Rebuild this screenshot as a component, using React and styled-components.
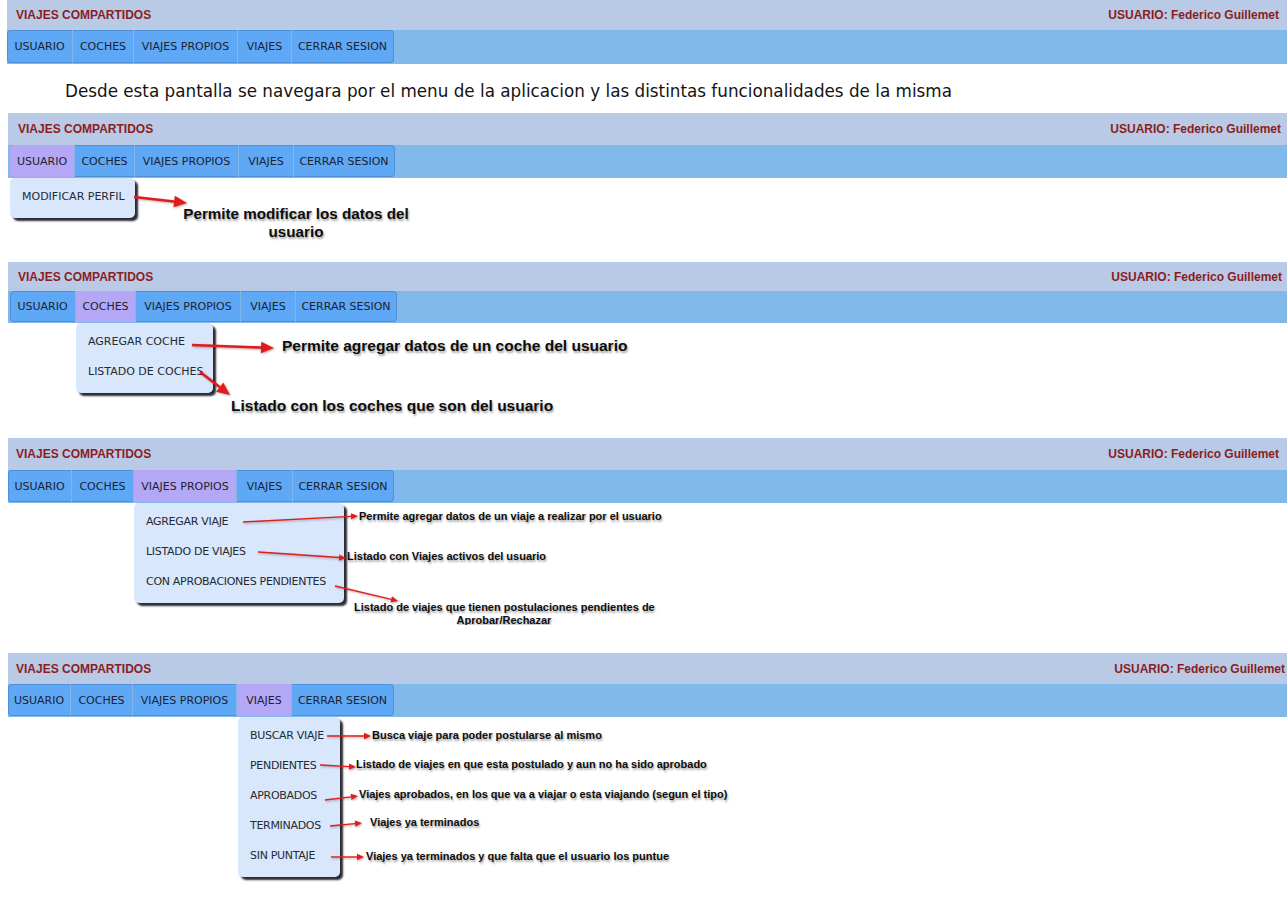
import React from 'react';
import styled, { createGlobalStyle } from 'styled-components';

const GlobalStyle = createGlobalStyle`
  html, body {
    margin: 0;
    padding: 0;
    background: #ffffff;
  }
  body {
    font-family: "DejaVu Sans", Verdana, sans-serif;
  }
`;

const MENU = ['USUARIO', 'COCHES', 'VIAJES PROPIOS', 'VIAJES', 'CERRAR SESION'];
const RED = '#e01c1c';

const Page = styled.div`
  display: flex;
  flex-direction: column;
  width: 1287px;
  height: 919px;
  overflow: hidden;
`;

const Shot = styled.section`
  position: relative;
  display: flex;
  flex-direction: column;
  margin-bottom: ${(p) => p.$gap || 0}px;
  height: ${(p) => p.$height}px;
  overflow: hidden;
  flex-shrink: 0;
`;

const Header = styled.header`
  display: flex;
  justify-content: space-between;
  align-items: center;
  height: ${(p) => p.$h}px;
  margin-left: ${(p) => p.$indent}px;
  padding: 0 ${(p) => p.$padRight}px 0 ${(p) => p.$padLeft}px;
  background: #b9cae6;
  font: bold 12px "Liberation Sans", Arial, sans-serif;
  color: #8b1d1f;
  flex-shrink: 0;
`;

const NavBar = styled.nav`
  display: flex;
  height: ${(p) => p.$h}px;
  margin-left: ${(p) => p.$indent}px;
  padding-left: ${(p) => p.$offset}px;
  background: #80b9ea;
  flex-shrink: 0;
`;

const Menu = styled.ul`
  display: flex;
  margin: 0;
  padding: 0;
  list-style: none;
  height: calc(100% - 1px);
  background: #5fa8f5;
  border-radius: 4px;
  box-shadow: inset 0 0 0 1px rgba(50, 100, 160, 0.35);
`;

const MenuItem = styled.li`
  position: relative;
  display: flex;
  align-items: center;
  justify-content: center;
  width: ${(p) => p.$w}px;
  font-size: 11px;
  color: #1c2230;
  background: ${(p) => (p.$active ? '#b4a8f6' : 'transparent')};
  border-right: 1px solid ${(p) => (p.$last ? 'transparent' : '#82b6ea')};
  border-radius: ${(p) => (p.$first ? '4px 0 0 4px' : p.$last ? '0 4px 4px 0' : '0')};
  box-sizing: border-box;
  white-space: nowrap;
`;

const Dropdown = styled.ul`
  position: absolute;
  top: calc(100% + 1px);
  left: ${(p) => p.$shift || 0}px;
  z-index: 2;
  width: ${(p) => p.$w}px;
  margin: 0;
  padding: 4px 0 6px;
  list-style: none;
  background: #d8e7fb;
  border-radius: 5px;
  box-shadow: 3px 3px 2px rgba(20, 20, 30, 0.9);
  box-sizing: border-box;
`;

const DropItem = styled.li`
  height: 30px;
  line-height: 30px;
  padding-left: 12px;
  font-size: 11px;
  letter-spacing: ${(p) => (p.$tight ? '-0.3px' : '0')};
  color: #262a33;
  white-space: nowrap;
`;

const Body = styled.div`
  flex: 1;
`;

const Intro = styled.p`
  display: flex;
  align-items: center;
  height: 49px;
  margin: 0;
  padding: 5px 0 0 65px;
  box-sizing: border-box;
  font-size: 16.8px;
  color: #141414;
  flex-shrink: 0;
`;

const Callout = styled.div`
  position: absolute;
  left: ${(p) => p.$x}px;
  top: ${(p) => p.$y}px;
  width: ${(p) => (p.$w ? `${p.$w}px` : 'auto')};
  z-index: 3;
  font: bold ${(p) => p.$size}px/${(p) => p.$lh}px "Liberation Sans", Arial, sans-serif;
  color: #0d0d0d;
  text-align: ${(p) => (p.$center ? 'center' : 'left')};
  text-shadow: 1px 2px 2px rgba(90, 90, 90, 0.55);
  white-space: nowrap;
`;

const Marks = styled.svg`
  position: absolute;
  inset: 0;
  width: 100%;
  height: 100%;
  z-index: 4;
  pointer-events: none;
  filter: drop-shadow(1px 1px 1px rgba(60, 0, 0, 0.35));
`;

const Arrow = ({ from, to, width, head }) => {
  const [x1, y1] = from;
  const [x2, y2] = to;
  const a = Math.atan2(y2 - y1, x2 - x1);
  const bx = x2 - head * Math.cos(a);
  const by = y2 - head * Math.sin(a);
  const hw = head * 0.45;
  const px = -Math.sin(a) * hw;
  const py = Math.cos(a) * hw;
  return (
    <g>
      <line x1={x1} y1={y1} x2={bx} y2={by} stroke={RED} strokeWidth={width} />
      <polygon points={`${x2},${y2} ${bx + px},${by + py} ${bx - px},${by - py}`} fill={RED} />
    </g>
  );
};

const shots = [
  {
    height: 149, indent: 8, padLeft: 10, padRight: 6, headerH: 32, navH: 33, offset: 2,
    widths: [65, 60, 104, 55, 101], active: 0,
    dropdown: { w: 125, items: ['MODIFICAR PERFIL'] },
    arrow: { width: 2.6, head: 13 },
    arrows: [[[134, 84], [187, 90]]],
    callouts: [
      { x: 180, y: 92, w: 232, size: 15.2, lh: 18, center: true, lines: ['Permite modificar los datos del', 'usuario'] },
    ],
  },
  {
    height: 176, indent: 8, padLeft: 10, padRight: 5, headerH: 29, navH: 32, offset: 2,
    widths: [66, 60, 105, 55, 101], active: 1,
    dropdown: { w: 137, items: ['AGREGAR COCHE', 'LISTADO DE COCHES'] },
    arrow: { width: 2.6, head: 13 },
    arrows: [[[192, 83], [274, 86]], [[200, 110], [230, 133]]],
    callouts: [
      { x: 282, y: 75, size: 15.5, lh: 18, lines: ['Permite agregar datos de un coche del usuario'] },
      { x: 231, y: 135, size: 15.5, lh: 18, lines: ['Listado con los coches que son del usuario'] },
    ],
  },
  {
    height: 187, gap: 28, indent: 8, padLeft: 8, padRight: 8, headerH: 32, navH: 33, offset: 0,
    widths: [64, 62, 103, 56, 101], active: 2, tight: true,
    dropdown: { w: 210, items: ['AGREGAR VIAJE', 'LISTADO DE VIAJES', 'CON APROBACIONES PENDIENTES'] },
    arrow: { width: 1.4, head: 7 },
    arrows: [[[243, 84], [358, 78]], [[258, 114], [346, 120]], [[335, 148], [398, 163]]],
    callouts: [
      { x: 359, y: 72, size: 11, lh: 13, lines: ['Permite agregar datos de un viaje a realizar por el usuario'] },
      { x: 347, y: 112, size: 11, lh: 13, lines: ['Listado con Viajes activos del usuario'] },
      { x: 354, y: 163, w: 300, size: 11, lh: 13, center: true, lines: ['Listado de viajes que tienen postulaciones pendientes de', 'Aprobar/Rechazar'] },
    ],
  },
  {
    height: 266, indent: 8, padLeft: 8, padRight: 2, headerH: 31, navH: 33, offset: 0,
    widths: [63, 62, 104, 55, 102], active: 3, tight: true,
    dropdown: { w: 102, shift: 1, items: ['BUSCAR VIAJE', 'PENDIENTES', 'APROBADOS', 'TERMINADOS', 'SIN PUNTAJE'] },
    arrow: { width: 1.4, head: 7 },
    arrows: [
      [[327, 83], [371, 83]],
      [[320, 112], [356, 114]],
      [[325, 147], [358, 143]],
      [[330, 173], [362, 170]],
      [[331, 204], [364, 204]],
    ],
    callouts: [
      { x: 372, y: 76, size: 11, lh: 13, lines: ['Busca viaje para poder postularse al mismo'] },
      { x: 356, y: 105, size: 11, lh: 13, lines: ['Listado de viajes en que esta postulado y aun no ha sido aprobado'] },
      { x: 359, y: 135, size: 11, lh: 13, lines: ['Viajes aprobados, en los que va a viajar o esta viajando (segun el tipo)'] },
      { x: 370, y: 163, size: 11, lh: 13, lines: ['Viajes ya terminados'] },
      { x: 366, y: 197, size: 11, lh: 13, lines: ['Viajes ya terminados y que falta que el usuario los puntue'] },
    ],
  },
];

const TopBars = ({ shot }) => (
  <>
    <Header $h={shot.headerH} $indent={shot.indent} $padLeft={shot.padLeft} $padRight={shot.padRight}>
      <span>VIAJES COMPARTIDOS</span>
      <span>USUARIO: Federico Guillemet</span>
    </Header>
    <NavBar $h={shot.navH} $indent={shot.indent} $offset={shot.offset}>
      <Menu>
        {MENU.map((label, i) => (
          <MenuItem
            key={label}
            $w={shot.widths[i]}
            $active={i === shot.active}
            $first={i === 0}
            $last={i === MENU.length - 1}
          >
            {label}
            {i === shot.active && shot.dropdown && (
              <Dropdown $w={shot.dropdown.w} $shift={shot.dropdown.shift}>
                {shot.dropdown.items.map((item) => (
                  <DropItem key={item} $tight={shot.tight}>{item}</DropItem>
                ))}
              </Dropdown>
            )}
          </MenuItem>
        ))}
      </Menu>
    </NavBar>
  </>
);

const App = () => {
  const first = {
    height: 64, indent: 7, padLeft: 9, padRight: 8, headerH: 30, navH: 34, offset: 0,
    widths: [66, 61, 104, 54, 102], active: -1,
  };

  return (
    <>
      <GlobalStyle />
      <Page>
        <Shot $height={first.height}>
          <TopBars shot={first} />
        </Shot>
        <Intro>Desde esta pantalla se navegara por el menu de la aplicacion y las distintas funcionalidades de la misma</Intro>
        {shots.map((shot, idx) => (
          <Shot key={idx} $height={shot.height} $gap={shot.gap}>
            <TopBars shot={shot} />
            <Body />
            {shot.callouts.map((c) => (
              <Callout key={c.lines[0]} $x={c.x} $y={c.y} $w={c.w} $size={c.size} $lh={c.lh} $center={c.center}>
                {c.lines.map((line) => (
                  <div key={line}>{line}</div>
                ))}
              </Callout>
            ))}
            <Marks>
              {shot.arrows.map(([from, to], i) => (
                <Arrow key={i} from={from} to={to} width={shot.arrow.width} head={shot.arrow.head} />
              ))}
            </Marks>
          </Shot>
        ))}
      </Page>
    </>
  );
};

export default App;
